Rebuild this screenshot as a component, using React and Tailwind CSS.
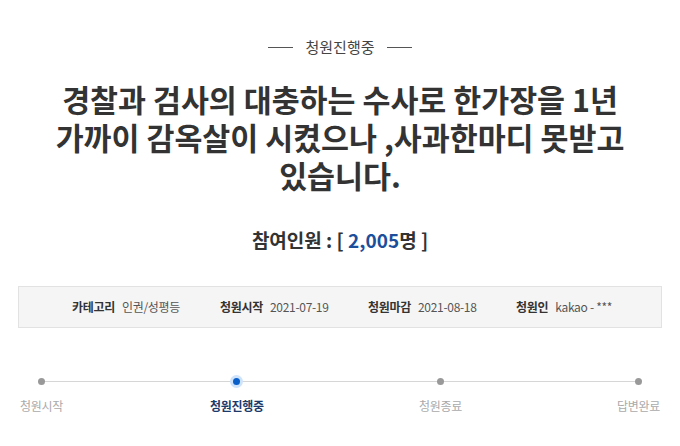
export default function App() {
    const info = [
        { label: "카테고리", value: "인권/성평등" },
        { label: "청원시작", value: "2021-07-19" },
        { label: "청원마감", value: "2021-08-18" },
        { label: "청원인", value: "kakao - ***" },
    ];

    const steps = [
        { label: "청원시작", active: false },
        { label: "청원진행중", active: true },
        { label: "청원종료", active: false },
        { label: "답변완료", active: false },
    ];

    return (
        <div className="w-[680px] h-[446px] bg-white overflow-hidden" style={{ fontFamily: '"Noto Sans CJK KR", "Noto Sans", sans-serif' }}>
            {/* status */}
            <div className="flex items-center justify-center gap-3 pt-[37px]">
                <div className="w-[25px] h-px bg-[#555]" />
                <span className="text-[15px] leading-[20px] text-[#444]">청원진행중</span>
                <div className="w-[25px] h-px bg-[#555]" />
            </div>

            {/* title */}
            <h1 className="mx-auto mt-[23px] w-[600px] text-center text-[30.4px] leading-[38px] font-bold text-[#333] break-keep">
                경찰과 검사의 대충하는 수사로 한가장을 1년 가까이 감옥살이 시켰으나 ,사과한마디 못받고 있습니다.
            </h1>

            {/* count */}
            <div className="mt-[33px] text-center text-[19px] leading-[26px] font-bold text-[#333]">
                참여인원 : [ <span className="text-[#1b4e9b]">2,005</span>명 ]
            </div>

            {/* info box */}
            <div className="mx-[18px] mt-[33px] h-[42px] bg-[#f5f5f5] border border-[#e2e2e2] flex items-center pl-[53px] text-[12px] text-[#333] tracking-tight">
                {info.map((item, i) => (
                    <div key={i} className={`flex items-center gap-[7px] ${i < 3 ? "w-[148px]" : ""}`}>
                        <span className="font-bold">{item.label}</span>
                        <span className="text-[#555]">{item.value}</span>
                    </div>
                ))}
            </div>

            {/* progress */}
            <div className="relative mx-[20px] mt-[47px] flex justify-between">
                <div className="absolute left-[21px] right-[21px] top-[6px] h-px bg-[#d6d6d6]" />
                {steps.map((s, i) => (
                    <div key={i} className={`relative flex flex-col items-center ${i === 1 ? "-ml-[8px]" : ""}`}>
                        <div className="h-[13px] flex items-center justify-center">
                            {s.active ? (
                                <div className="w-[13px] h-[13px] rounded-full bg-[#cfe3fb] flex items-center justify-center">
                                    <div className="w-[7px] h-[7px] rounded-full bg-[#0b5fc9]" />
                                </div>
                            ) : (
                                <div className="w-[7px] h-[7px] rounded-full bg-[#999]" />
                            )}
                        </div>
                        <span className={`mt-[10px] text-[12px] leading-[16px] tracking-tight ${s.active ? "font-bold text-[#1c3b6b]" : "text-[#aaa]"}`}>
                            {s.label}
                        </span>
                    </div>
                ))}
            </div>
        </div>
    );
}
